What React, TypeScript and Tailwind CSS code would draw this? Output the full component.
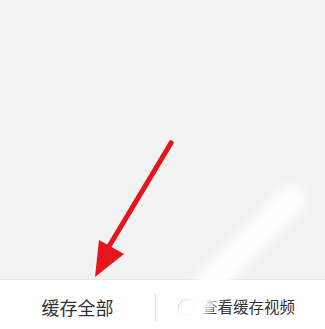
export default function App() {
  return (
    <div
      className="relative w-[325px] h-[329px] flex flex-col bg-white overflow-hidden"
      style={{ fontFamily: '"Noto Sans CJK SC", "Noto Sans", sans-serif' }}
    >
      <div className="h-[280px] bg-[#f2f2f2] border-b border-[#e6e6e6]" />
      <div className="flex-1 flex items-center pt-[5px]">
        <div className="w-[155px] flex justify-center text-[18px] text-[#333] leading-none">
          缓存全部
        </div>
        <div className="w-px h-[28px] bg-[#dcdcdc]" />
        <div className="flex-1 flex items-center pl-[22px] gap-[7px] text-[15.5px] text-[#333] leading-none">
          <span className="w-[17px] h-[17px] rounded-full border border-[#999]" />
          <span>查看缓存视频</span>
        </div>
      </div>

      {/* red arrow */}
      <svg className="absolute left-0 top-0 pointer-events-none" width="325" height="329" viewBox="0 0 325 329">
        <line x1="171" y1="143" x2="108" y2="248" stroke="#e8141b" strokeWidth="5" strokeLinecap="round" />
        <polygon points="99,240 124,254 95,277" fill="#e8141b" />
      </svg>

      {/* white smear watermark */}
      <svg className="absolute left-0 top-0 pointer-events-none" width="325" height="329" viewBox="0 0 325 329">
        <defs>
          <filter id="b" x="-50%" y="-50%" width="200%" height="200%">
            <feGaussianBlur stdDeviation="5" />
          </filter>
        </defs>
        <path
          d="M183 322 L224 268 L258 234 L290 200"
          stroke="#ffffff"
          strokeWidth="28"
          strokeLinecap="round"
          fill="none"
          opacity="0.95"
          filter="url(#b)"
        />
      </svg>
    </div>
  );
}
